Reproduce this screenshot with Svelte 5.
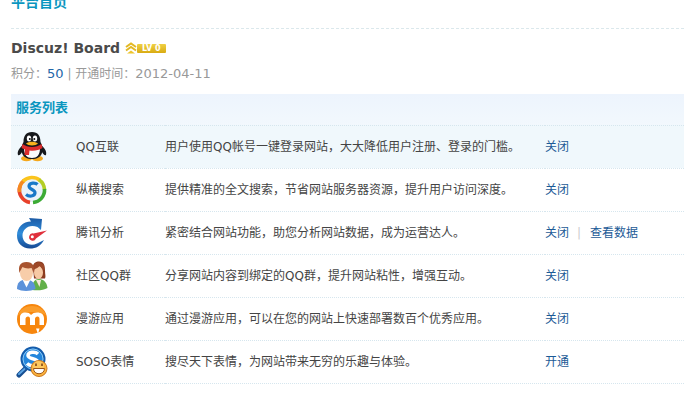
<script lang="ts">
  type Action = { label: string; href: string };
  type Service = { icon: string; name: string; desc: string; actions: Action[]; active?: boolean };

  let level: number = 0;
  let points: number = 50;
  let openedAt: string = '2012-04-11';

  const close: Action = { label: '关闭', href: '#close' };

  let services: Service[] = [
    { icon: 'qq', name: 'QQ互联', desc: '用户使用QQ帐号一键登录网站，大大降低用户注册、登录的门槛。', actions: [close], active: true },
    { icon: 'search', name: '纵横搜索', desc: '提供精准的全文搜索，节省网站服务器资源，提升用户访问深度。', actions: [close] },
    { icon: 'stats', name: '腾讯分析', desc: '紧密结合网站功能，助您分析网站数据，成为运营达人。', actions: [close, { label: '查看数据', href: '#data' }] },
    { icon: 'group', name: '社区QQ群', desc: '分享网站内容到绑定的QQ群，提升网站粘性，增强互动。', actions: [close] },
    { icon: 'manyou', name: '漫游应用', desc: '通过漫游应用，可以在您的网站上快速部署数百个优秀应用。', actions: [close] },
    { icon: 'soso', name: 'SOSO表情', desc: '搜尽天下表情，为网站带来无穷的乐趣与体验。', actions: [{ label: '开通', href: '#open' }] },
  ];
</script>

<main class="page">
  <h1 class="page-title">平台首页</h1>

  <section class="site">
    <div class="site-head">
      <h2 class="site-name">Discuz! Board</h2>
      <span class="level">
        <svg viewBox="0 0 12 12" width="12" height="12" fill="none" aria-hidden="true">
          <path d="M1 5 6 1.500 11 5M1 8.500 6 5 11 8.500" stroke="#e3b823" stroke-width="2" />
          <path d="M2 11.500 6 8.500 10 11.500Z" fill="#edc52e" />
        </svg>
        <span class="level-text">LV {level}</span>
      </span>
    </div>
    <p class="site-meta">积分：<span class="num points">{points}</span> | 开通时间：<span class="num">{openedAt}</span></p>
  </section>

  <table class="services">
    <thead>
      <tr><th colspan="4">服务列表</th></tr>
    </thead>
    <tbody>
      {#each services as s}
        <tr class:active={s.active}>
          <td class="col-icon">
            <svg viewBox="0 0 32 32" width="32" height="32" aria-hidden="true">
              {#if s.icon === 'qq'}
                <ellipse cx="10.500" cy="27.500" rx="5.500" ry="2.800" fill="#f5a81c" />
                <ellipse cx="21.500" cy="27.500" rx="5.500" ry="2.800" fill="#f5a81c" />
                <path d="M7 14C3 17 1 21 2 24c1 1 3-1 4-3zM25 14c4 3 6 7 5 10-1 1-3-1-4-3z" fill="#17191c" />
                <path d="M16 1C10 1 7.500 5 7.500 11 5 15 5 19 6 22c1.500 4 5 6 10 6s8.500-2 10-6c1-3 1-7-1.500-11C24.500 5 22 1 16 1z" fill="#17191c" />
                <path d="M8 17c0 7 3 10 8 10s8-3 8-10c-5 2-11 2-16 0z" fill="#fafafa" />
                <ellipse cx="13" cy="7.500" rx="2.200" ry="3" fill="#fff" />
                <ellipse cx="19" cy="7.500" rx="2.200" ry="3" fill="#fff" />
                <circle cx="13.800" cy="8" r="1" fill="#111" />
                <circle cx="18.300" cy="8" r="1" fill="#111" />
                <path d="M6.500 13c5 4 14 4 19 0l1 4c-4 2.500-8 3-13 2.500l-.5 4.500H8.500l.5-5.500-3.500-1.500z" fill="#dd2d2d" />
                <path d="M10 12.500c3-2.500 9-2.500 12 0-2 2.500-10 2.500-12 0z" fill="#f8b21c" />
              {:else if s.icon === 'search'}
                <circle cx="16" cy="16" r="12" fill="#e9f2fa" />
                <g fill="none" stroke-width="3.600">
                  <path d="M14 28.400A12.500 12.500 0 0 1 4 12" stroke="#e8412a" />
                  <path d="M3.600 18A12.500 12.500 0 0 1 8 6.500" stroke="#f58a20" />
                  <path d="M7 7.300A12.500 12.500 0 0 1 24 6.400" stroke="#fbc41d" />
                  <path d="M23 5.700A12.500 12.500 0 0 1 28.500 16" stroke="#b4ce25" />
                  <path d="M28.500 15A12.500 12.500 0 0 1 17 28.500" stroke="#3cab35" />
                </g>
                <path d="M21.500 10.500c-2-2-8-2-8.500 1.500-.4 3.500 6.500 3.500 6 7-.5 3.500-6 4-9 1.500" fill="none" stroke="#1878c8" stroke-width="3.200" />
              {:else if s.icon === 'stats'}
                <defs>
                  <linearGradient id="stats-arc" x1="0" y1="0" x2="0" y2="1">
                    <stop offset="0" stop-color="#1b5aa5" />
                    <stop offset=".5" stop-color="#2f8ddb" />
                    <stop offset="1" stop-color="#164a94" />
                  </linearGradient>
                </defs>
                <path d="M13 1 26 2 25 13 21.500 10C13 6.500 6.500 12 6.500 18.500 6.500 26 14 30 21 26.500L28 23C25 29 20 31.500 14 31.500 6 31.500 1 26 1 18.500 1 10.500 7 4.500 15 4.500z" fill="url(#stats-arc)" />
                <path d="M31 13.500 20 21.500A3.600 3.600 0 1 1 17.500 16.500z" fill="#e0303c" />
                <circle cx="16.300" cy="19.800" r="1.500" fill="#fff" />
              {:else if s.icon === 'group'}
                <path d="M16 30c0-7 2-11 7-11 5 0 8 4 8.500 9-4 2.500-10 2.500-15.500 2z" fill="#62b04a" />
                <path d="M20 20h5l-1.500 7z" fill="#f8e7dc" />
                <path d="M17 7c0-4 3-5.500 6-5.500 5 0 6 4 6 9 0 4 1 6 0 8H18z" fill="#8c3c20" />
                <ellipse cx="22.500" cy="12.500" rx="4.500" ry="6.500" fill="#f7c9a4" />
                <path d="M17 9c4 0 6-2 7-4 1 3 2 4 4 5V5l-5-3-5 2z" fill="#9d4827" />
                <path d="M1 29c0-6 3-9.500 9-9.500s9 3.500 9.500 9.500c-5 2.500-14 2.500-18.500 0z" fill="#5c92da" />
                <path d="m6.500 19.500 4 8 4-8z" fill="#fff" />
                <ellipse cx="10.500" cy="13" rx="6.500" ry="8" fill="#f8cda9" />
                <path d="M3.500 13C2 6 4 2 10.500 2S19 6 17.500 13c-1-2-1-3-2-5-4 1-7 0-9-1-1 2-2 3-3 6z" fill="#a8532e" />
              {:else if s.icon === 'manyou'}
                <circle cx="16" cy="16" r="15" fill="#f7860d" />
                <path d="M2 12C6 0 26 0 30 12 22 8 10 8 2 12z" fill="#fb9d2b" />
                <path d="M4 22V14.500C4 11 6 9.500 9.500 9.500c2.500 0 4.500.8 5.500 2.500 1.500-1.700 3.500-2.500 6-2.500 4.500 0 7 2 7 6V22h-4.500v-6c0-1.600-.6-2.500-2-2.500s-2.500.9-2.500 2.500v6h-5v-6c0-1.600-.6-2.500-2-2.500s-2.500.9-2.500 2.500v6z" fill="#fff" />
                <path d="M20 25.500h3.500L22 31z" fill="#fff" />
              {:else}
                <path d="M9 23 3 29" stroke="#174e91" stroke-width="5" stroke-linecap="round" />
                <path d="M8.500 23 3 28" stroke="#5ba4e3" stroke-width="2" stroke-linecap="round" />
                <circle cx="17" cy="13" r="11.500" fill="#2386dc" stroke="#145cab" stroke-width="2" />
                <circle cx="17" cy="13" r="10" fill="none" stroke="#8bc8f5" />
                <path d="M22 8c-3-3-10-2-10 1.500 0 4 10 2.500 10 7 0 4-8 4-11 1" fill="none" stroke="#fff" stroke-width="3.500" />
                <circle cx="23" cy="22.500" r="8" fill="#fbb33c" stroke="#c97721" />
                <circle cx="22.500" cy="20.500" r="5.500" fill="#fdc85f" />
                <path d="M17.500 22.500h11c0 7-11 7-11 0z" fill="#fff" stroke="#9c5518" />
                <path d="M20 17.500v2.500M26 17.500v2.500" stroke="#7b3e10" stroke-width="1.500" />
              {/if}
            </svg>
          </td>
          <td class="col-name">{s.name}</td>
          <td class="col-desc">{s.desc}</td>
          <td class="col-actions">
            {#each s.actions as a, i}
              {#if i > 0}<span class="sep">|</span>{/if}
              <a href={a.href}>{a.label}</a>
            {/each}
          </td>
        </tr>
      {/each}
    </tbody>
  </table>
</main>

<style>
  :global(body) {
    margin: 0;
    background: #fff;
  }
  .page {
    padding-left: 11px;
    overflow: hidden;
    color: #444;
    font-family: "DejaVu Sans", "Noto Sans CJK SC", sans-serif;
    font-size: 12px;
    line-height: 18px;
  }
  .page-title {
    margin: -8px 0 0;
    padding-bottom: 16px;
    border-bottom: 1px dashed #dbe8ec;
    color: #0a96bf;
    font-size: 14px;
    line-height: 20px;
  }
  .site { padding: 9px 0 11px; }
  .site-head { display: flex; align-items: center; gap: 5px; }
  .site-name {
    margin: 0;
    color: #4a4a4a;
    font-size: 14px;
    line-height: 20px;
  }
  .level { display: flex; align-items: center; }
  .level-text {
    padding: 0 5px;
    border-radius: 1px;
    background: linear-gradient(#efd045, #d9ab12);
    color: #fff;
    font-size: 8px;
    font-weight: 700;
    line-height: 9px;
  }
  .site-meta { margin: 7px 0 0; color: #999; }
  .num { font-size: 13px; }
  .points { color: #2366a8; }

  .services {
    width: 100%;
    border-collapse: collapse;
  }
  th {
    height: 31px;
    padding: 0 5px 2px;
    box-sizing: border-box;
    background: linear-gradient(#edf4fd, #f2f8fd);
    color: #0a96bf;
    font-size: 13px;
    text-align: left;
  }
  td {
    height: 42px;
    padding: 0;
    border-top: 1px dotted #d6e6ee;
    border-bottom: 1px dotted #d6e6ee;
    white-space: nowrap;
  }
  .active td { background: #f0f8fc; }
  .col-icon { width: 60px; padding-left: 5px; }
  .col-icon svg { display: block; }
  .col-name { width: 89px; }
  .col-desc { width: 380px; }
  a { color: #1c5a96; text-decoration: none; }
  a:hover { text-decoration: underline; }
  .sep { margin: 0 5px 0 8px; color: #ccc; }
</style>
